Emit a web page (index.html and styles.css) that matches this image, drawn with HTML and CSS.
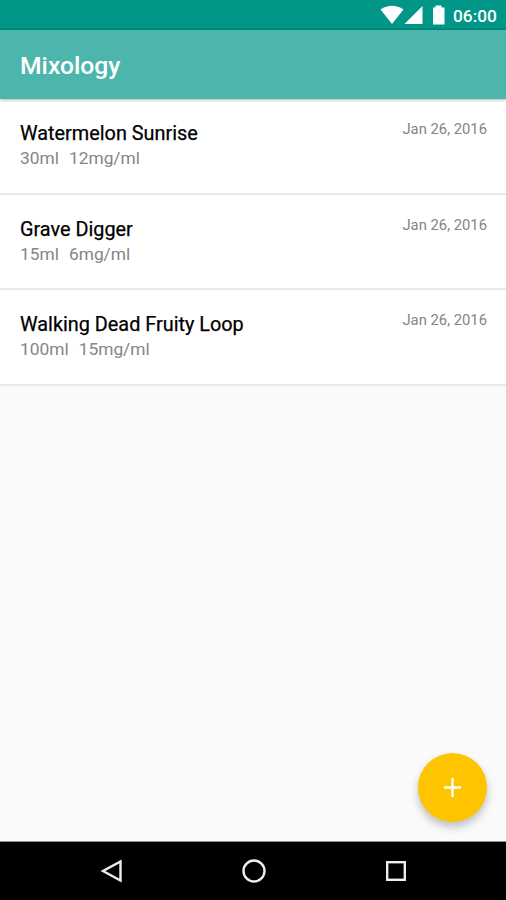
FILE: index.html
```html
<!DOCTYPE html>
<html lang="en">
<head>
<meta charset="utf-8">
<title>Mixology</title>
<link rel="stylesheet" href="styles.css">
</head>
<body>
<div class="screen">
  <div class="status">
    <svg class="status-icons" width="70" height="30" viewBox="0 0 70 30">
      <path d="M.5 9.500Q12 2 23.500 9.500L12 24Z" fill="#fff"/>
      <path d="M42.500 6V24H24.500Z" fill="#fff"/>
      <path d="M53 7.500h2.500V5.500h6V7.500H64.500V24.500H53Z" fill="#fff"/>
    </svg>
    <span class="clock">06:00</span>
  </div>
  <header class="toolbar"><h1>Mixology</h1></header>
  <main class="list">
    <article class="item">
      <div class="info"><h2>Watermelon Sunrise</h2><p><span>30ml</span><span>12mg/ml</span></p></div>
      <time>Jan 26, 2016</time>
    </article>
    <article class="item">
      <div class="info"><h2>Grave Digger</h2><p><span>15ml</span><span>6mg/ml</span></p></div>
      <time>Jan 26, 2016</time>
    </article>
    <article class="item">
      <div class="info"><h2>Walking Dead Fruity Loop</h2><p><span>100ml</span><span>15mg/ml</span></p></div>
      <time>Jan 26, 2016</time>
    </article>
  </main>
  <button class="fab" aria-label="Add"><svg width="19" height="19" viewBox="0 0 19 19"><path d="M9.500 0v19M1 9.500h17" stroke="#fff" stroke-width="2.400"/></svg></button>
  <nav class="nav">
    <svg width="26" height="26" viewBox="0 0 26 26"><path d="M22.500 3.500V22.500L5 13Z"/></svg>
    <svg width="26" height="26" viewBox="0 0 26 26"><circle cx="13" cy="13" r="10.500"/></svg>
    <svg width="26" height="26" viewBox="0 0 26 26"><rect x="4.200" y="4.200" width="17.600" height="17.600"/></svg>
  </nav>
</div>
</body>
</html>
```
FILE: styles.css
```css
* { box-sizing: border-box; }
body { margin: 0; font-family: Roboto, sans-serif; }
h1, h2, p { margin: 0; font-weight: 500; }
.screen { position: relative; display: flex; flex-direction: column; height: 900px; background: #fafafa; overflow: hidden; }
.status { display: flex; justify-content: flex-end; align-items: center; flex: none; height: 30px; padding-right: 9px; background: linear-gradient(#009688 27px, #008779); color: #fff; }
.status-icons { margin-right: 3px; }
.clock { width: 44px; padding-top: 1px; font-size: 17.300px; font-weight: 500; line-height: 30px; white-space: nowrap; }
.toolbar { position: relative; display: flex; align-items: center; flex: none; height: 69px; padding: 3px 20px 0; background: #4db6ac; color: #fff; box-shadow: 0 1px 3px rgba(0,0,0,.3); }
h1 { font-size: 24.700px; line-height: 30px; }
.list { flex: 1; }
.item { display: flex; justify-content: space-between; height: 95.600px; padding: 21px 19px 0 20px; background: #fff; border-bottom: 2px solid #e9e9e9; }
h2 { padding-top: 1px; color: #000; font-size: 19.850px; font-weight: 400; line-height: 26px; -webkit-text-stroke: .25px #000; }
.info p { display: flex; gap: 10px; color: #858585; font-size: 17.350px; font-weight: 400; line-height: 22px; }
time { color: #858585; font-size: 14.800px; line-height: 19px; }
.fab { position: absolute; left: 418px; top: 753px; display: grid; place-items: center; width: 69px; height: 69px; padding: 0; border: 0; border-radius: 50%; background: #ffc400; box-shadow: 0 5px 9px rgba(0,0,0,.24); }
.nav { display: flex; justify-content: space-between; align-items: center; flex: none; height: 59px; padding: 0 97px 0 98px; background: #000; border-top: 1px solid #909090; }
.nav svg { fill: none; stroke: #eee; stroke-width: 2.400; }
```
